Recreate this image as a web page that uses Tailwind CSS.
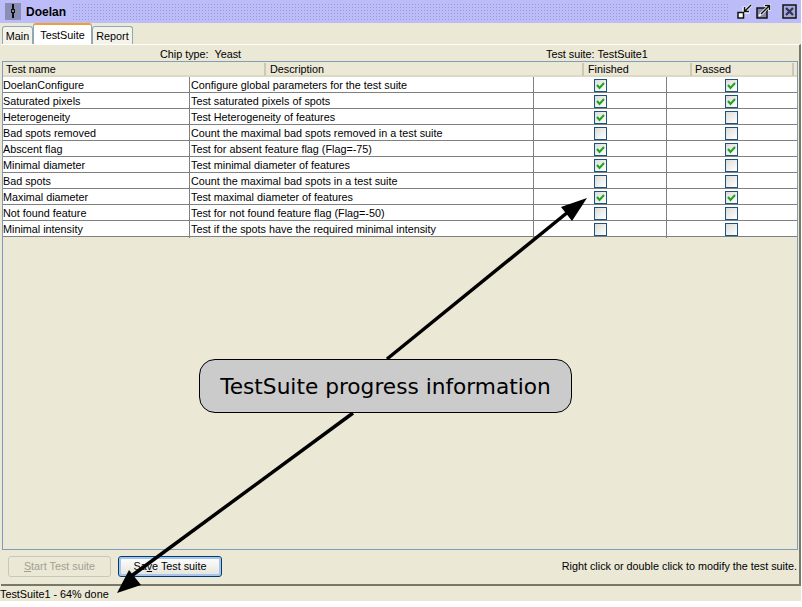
<!DOCTYPE html>
<html lang="en">
<head>
  <meta charset="UTF-8" />
  <title>Doelan</title>
  <script src="https://cdn.jsdelivr.net/npm/@tailwindcss/browser@4"></script>
</head>
<body class="bg-white font-['Liberation_Sans',Arial,sans-serif] text-[10.8px] text-black">
<div class="relative w-[801px] h-[601px] flex flex-col bg-[#ebe8d6] overflow-hidden">

  <!-- title bar -->
  <div class="h-[23px] shrink-0 flex items-center bg-[#bcbcf8] pl-[5px] pr-[4px]">
    <div class="w-[16px] h-[17px] bg-[#8a8eb4] flex items-center justify-center">
      <svg width="8" height="15" viewBox="0 0 8 15"><path d="M3 0h2v5h1v4H5v5H3V9H2V5h1z" fill="#111"/><path d="M3.5 6h1v2h-1z" fill="#fff"/></svg>
    </div>
    <span class="ml-[5px] text-[12px] font-bold w-[43px]">Doelan</span>
    <div class="flex-1 h-[17px] mx-[3px] bg-[radial-gradient(#9a9ad8_1px,transparent_1px)] bg-[length:3px_3px]"></div>
    <svg class="ml-[4px]" width="15" height="15" viewBox="0 0 15 15"><path d="M7.5 7.5L14 1M7 2.5v5.5h5.5" fill="none" stroke="#fff" stroke-width="3"/><path d="M7.5 7.5L14 1M7.5 3v4.5H12" fill="none" stroke="#111" stroke-width="1.5"/><rect x="1" y="8.5" width="5.5" height="5.5" fill="#fff" stroke="#111" stroke-width="1.5"/></svg>
    <svg class="ml-[4px]" width="15" height="15" viewBox="0 0 15 15"><rect x="1" y="4" width="10" height="10" fill="#8a8ab0" stroke="#111" stroke-width="1.5"/><path d="M3 12L6 9" stroke="#fff" stroke-width="2"/><path d="M5 10L13.5 1.5M8.5 1.5H13.5V6.5" fill="none" stroke="#fff" stroke-width="3"/><path d="M5 10L13.5 1.5M9 1.5H13.5V6" fill="none" stroke="#111" stroke-width="1.5"/></svg>
    <svg class="ml-[11px]" width="15" height="15" viewBox="0 0 15 15"><rect x="1" y="1" width="13" height="13" fill="#a8a8d8" stroke="#111" stroke-width="1.5"/><path d="M4 4l7 7M11 4l-7 7" stroke="#333358" stroke-width="2.2"/></svg>
  </div>

  <!-- tabs -->
  <div class="h-[21px] shrink-0 flex items-end pl-[2px]">
    <div class="h-[18px] w-[31px] pt-[2px] flex items-center justify-center bg-[#f4f3ea] border border-b-0 border-[#91a7b4] rounded-t-[3px]">Main</div>
    <div class="h-[21px] w-[59px] pt-[1px] flex items-center justify-center bg-white border-t-[2px] border-t-[#f0a030] border-x border-x-[#91a7b4] rounded-t-[3px]">TestSuite</div>
    <div class="h-[18px] w-[41px] pt-[2px] flex items-center justify-center bg-[#f4f3ea] border border-b-0 border-[#91a7b4] rounded-t-[3px]">Report</div>
  </div>

  <!-- panel -->
  <div class="flex-1 flex flex-col border-t border-t-white border-r-[2px] border-r-[#77776a] border-b-[2px] border-b-[#77776a] ml-[1px] min-h-0">
    <div class="h-[16px] shrink-0 flex items-center pt-[2px]">
      <span class="ml-[159px] w-[386px]">Chip type:&nbsp; Yeast</span>
      <span>Test suite: TestSuite1</span>
    </div>

    <div class="h-[489px] shrink-0 ml-[1px] mr-[1px] border border-[#7f9db9]">
      <div class="grid grid-cols-[263px_318px_108px_1fr] h-[15px] pt-[1px] bg-[#ebe8d6] border-b-[2px] border-b-[#dcd9c4] leading-[13px]">
        <div class="pl-[3px] border-r-[2px] border-r-[#cbc8b4]">Test name</div>
        <div class="pl-[4px] border-r-[2px] border-r-[#cbc8b4]">Description</div>
        <div class="pl-[4px] border-r-[2px] border-r-[#cbc8b4]">Finished</div>
        <div class="pl-[3px] mr-[3px] border-r-[2px] border-r-[#cbc8b4]">Passed</div>
      </div>
      <div class="bg-white">
        <div class="grid grid-cols-[187px_344px_133px_1fr] h-[16px] border-b border-b-[#808080] items-center">
          <div class="h-full leading-[17px] border-r border-r-[#808080]">DoelanConfigure</div>
          <div class="pl-[1px] h-full leading-[17px] border-r border-r-[#808080]">Configure global parameters for the test suite</div>
          <div class="h-full flex items-center justify-center border-r border-r-[#808080]"><div class="w-[13px] h-[13px] border border-[#1c5180] bg-gradient-to-br from-[#dcdcd7] to-white flex items-center justify-center"><svg width="9" height="9" viewBox="0 0 9 9"><path d="M1 4l2.5 3L8 2" fill="none" stroke="#21a121" stroke-width="2"/></svg></div></div>
          <div class="h-full pr-[2px] flex items-center justify-center"><div class="w-[13px] h-[13px] border border-[#1c5180] bg-gradient-to-br from-[#dcdcd7] to-white flex items-center justify-center"><svg width="9" height="9" viewBox="0 0 9 9"><path d="M1 4l2.5 3L8 2" fill="none" stroke="#21a121" stroke-width="2"/></svg></div></div>
        </div>
        <div class="grid grid-cols-[187px_344px_133px_1fr] h-[16px] border-b border-b-[#808080] items-center">
          <div class="h-full leading-[17px] border-r border-r-[#808080]">Saturated pixels</div>
          <div class="pl-[1px] h-full leading-[17px] border-r border-r-[#808080]">Test saturated pixels of spots</div>
          <div class="h-full flex items-center justify-center border-r border-r-[#808080]"><div class="w-[13px] h-[13px] border border-[#1c5180] bg-gradient-to-br from-[#dcdcd7] to-white flex items-center justify-center"><svg width="9" height="9" viewBox="0 0 9 9"><path d="M1 4l2.5 3L8 2" fill="none" stroke="#21a121" stroke-width="2"/></svg></div></div>
          <div class="h-full pr-[2px] flex items-center justify-center"><div class="w-[13px] h-[13px] border border-[#1c5180] bg-gradient-to-br from-[#dcdcd7] to-white flex items-center justify-center"><svg width="9" height="9" viewBox="0 0 9 9"><path d="M1 4l2.5 3L8 2" fill="none" stroke="#21a121" stroke-width="2"/></svg></div></div>
        </div>
        <div class="grid grid-cols-[187px_344px_133px_1fr] h-[16px] border-b border-b-[#808080] items-center">
          <div class="h-full leading-[17px] border-r border-r-[#808080]">Heterogeneity</div>
          <div class="pl-[1px] h-full leading-[17px] border-r border-r-[#808080]">Test Heterogeneity of features</div>
          <div class="h-full flex items-center justify-center border-r border-r-[#808080]"><div class="w-[13px] h-[13px] border border-[#1c5180] bg-gradient-to-br from-[#dcdcd7] to-white flex items-center justify-center"><svg width="9" height="9" viewBox="0 0 9 9"><path d="M1 4l2.5 3L8 2" fill="none" stroke="#21a121" stroke-width="2"/></svg></div></div>
          <div class="h-full pr-[2px] flex items-center justify-center"><div class="w-[13px] h-[13px] border border-[#1c5180] bg-gradient-to-br from-[#dcdcd7] to-white"></div></div>
        </div>
        <div class="grid grid-cols-[187px_344px_133px_1fr] h-[16px] border-b border-b-[#808080] items-center">
          <div class="h-full leading-[17px] border-r border-r-[#808080]">Bad spots removed</div>
          <div class="pl-[1px] h-full leading-[17px] border-r border-r-[#808080]">Count the maximal bad spots removed in a test suite</div>
          <div class="h-full flex items-center justify-center border-r border-r-[#808080]"><div class="w-[13px] h-[13px] border border-[#1c5180] bg-gradient-to-br from-[#dcdcd7] to-white"></div></div>
          <div class="h-full pr-[2px] flex items-center justify-center"><div class="w-[13px] h-[13px] border border-[#1c5180] bg-gradient-to-br from-[#dcdcd7] to-white"></div></div>
        </div>
        <div class="grid grid-cols-[187px_344px_133px_1fr] h-[16px] border-b border-b-[#808080] items-center">
          <div class="h-full leading-[17px] border-r border-r-[#808080]">Abscent flag</div>
          <div class="pl-[1px] h-full leading-[17px] border-r border-r-[#808080]">Test for absent feature flag (Flag=-75)</div>
          <div class="h-full flex items-center justify-center border-r border-r-[#808080]"><div class="w-[13px] h-[13px] border border-[#1c5180] bg-gradient-to-br from-[#dcdcd7] to-white flex items-center justify-center"><svg width="9" height="9" viewBox="0 0 9 9"><path d="M1 4l2.5 3L8 2" fill="none" stroke="#21a121" stroke-width="2"/></svg></div></div>
          <div class="h-full pr-[2px] flex items-center justify-center"><div class="w-[13px] h-[13px] border border-[#1c5180] bg-gradient-to-br from-[#dcdcd7] to-white flex items-center justify-center"><svg width="9" height="9" viewBox="0 0 9 9"><path d="M1 4l2.5 3L8 2" fill="none" stroke="#21a121" stroke-width="2"/></svg></div></div>
        </div>
        <div class="grid grid-cols-[187px_344px_133px_1fr] h-[16px] border-b border-b-[#808080] items-center">
          <div class="h-full leading-[17px] border-r border-r-[#808080]">Minimal diameter</div>
          <div class="pl-[1px] h-full leading-[17px] border-r border-r-[#808080]">Test minimal diameter of features</div>
          <div class="h-full flex items-center justify-center border-r border-r-[#808080]"><div class="w-[13px] h-[13px] border border-[#1c5180] bg-gradient-to-br from-[#dcdcd7] to-white flex items-center justify-center"><svg width="9" height="9" viewBox="0 0 9 9"><path d="M1 4l2.5 3L8 2" fill="none" stroke="#21a121" stroke-width="2"/></svg></div></div>
          <div class="h-full pr-[2px] flex items-center justify-center"><div class="w-[13px] h-[13px] border border-[#1c5180] bg-gradient-to-br from-[#dcdcd7] to-white"></div></div>
        </div>
        <div class="grid grid-cols-[187px_344px_133px_1fr] h-[16px] border-b border-b-[#808080] items-center">
          <div class="h-full leading-[17px] border-r border-r-[#808080]">Bad spots</div>
          <div class="pl-[1px] h-full leading-[17px] border-r border-r-[#808080]">Count the maximal bad spots in a test suite</div>
          <div class="h-full flex items-center justify-center border-r border-r-[#808080]"><div class="w-[13px] h-[13px] border border-[#1c5180] bg-gradient-to-br from-[#dcdcd7] to-white"></div></div>
          <div class="h-full pr-[2px] flex items-center justify-center"><div class="w-[13px] h-[13px] border border-[#1c5180] bg-gradient-to-br from-[#dcdcd7] to-white"></div></div>
        </div>
        <div class="grid grid-cols-[187px_344px_133px_1fr] h-[16px] border-b border-b-[#808080] items-center">
          <div class="h-full leading-[17px] border-r border-r-[#808080]">Maximal diameter</div>
          <div class="pl-[1px] h-full leading-[17px] border-r border-r-[#808080]">Test maximal diameter of features</div>
          <div class="h-full flex items-center justify-center border-r border-r-[#808080]"><div class="w-[13px] h-[13px] border border-[#1c5180] bg-gradient-to-br from-[#dcdcd7] to-white flex items-center justify-center"><svg width="9" height="9" viewBox="0 0 9 9"><path d="M1 4l2.5 3L8 2" fill="none" stroke="#21a121" stroke-width="2"/></svg></div></div>
          <div class="h-full pr-[2px] flex items-center justify-center"><div class="w-[13px] h-[13px] border border-[#1c5180] bg-gradient-to-br from-[#dcdcd7] to-white flex items-center justify-center"><svg width="9" height="9" viewBox="0 0 9 9"><path d="M1 4l2.5 3L8 2" fill="none" stroke="#21a121" stroke-width="2"/></svg></div></div>
        </div>
        <div class="grid grid-cols-[187px_344px_133px_1fr] h-[16px] border-b border-b-[#808080] items-center">
          <div class="h-full leading-[17px] border-r border-r-[#808080]">Not found feature</div>
          <div class="pl-[1px] h-full leading-[17px] border-r border-r-[#808080]">Test for not found feature flag (Flag=-50)</div>
          <div class="h-full flex items-center justify-center border-r border-r-[#808080]"><div class="w-[13px] h-[13px] border border-[#1c5180] bg-gradient-to-br from-[#dcdcd7] to-white"></div></div>
          <div class="h-full pr-[2px] flex items-center justify-center"><div class="w-[13px] h-[13px] border border-[#1c5180] bg-gradient-to-br from-[#dcdcd7] to-white"></div></div>
        </div>
        <div class="grid grid-cols-[187px_344px_133px_1fr] h-[16px] border-b border-b-[#808080] items-center">
          <div class="h-full leading-[17px] border-r border-r-[#808080]">Minimal intensity</div>
          <div class="pl-[1px] h-full leading-[17px] border-r border-r-[#808080]">Test if the spots have the required minimal intensity</div>
          <div class="h-full flex items-center justify-center border-r border-r-[#808080]"><div class="w-[13px] h-[13px] border border-[#1c5180] bg-gradient-to-br from-[#dcdcd7] to-white"></div></div>
          <div class="h-full pr-[2px] flex items-center justify-center"><div class="w-[13px] h-[13px] border border-[#1c5180] bg-gradient-to-br from-[#dcdcd7] to-white"></div></div>
        </div>
      </div>
    </div>

    <div class="flex-1 flex items-center pl-[7px] pr-[2px] pb-[2px]">
      <button class="w-[103px] h-[21px] border border-[#c9c7ba] rounded-[3px] text-[#a19f92]"><span class="underline">S</span>tart Test suite</button>
      <button class="ml-[7px] w-[104px] h-[21px] border border-[#003c74] rounded-[3px] bg-gradient-to-b from-white to-[#e3e3db] shadow-[inset_0_0_0_2px_#a9c4ea]">Sa<span class="underline">v</span>e Test suite</button>
      <span class="ml-auto">Right click or double click to modify the test suite.</span>
    </div>
  </div>

  <!-- status bar -->
  <div class="h-[15px] shrink-0 leading-[16px]">TestSuite1 - 64% done</div>

  <!-- annotation over the page -->
  <svg class="absolute left-0 top-0 pointer-events-none" width="801" height="601" viewBox="0 0 801 601">
    <path d="M387 359L568 212" stroke="#000" stroke-width="3.5" fill="none"/>
    <path d="M353 413L130 577" stroke="#000" stroke-width="3.5" fill="none"/>
    <path d="M587 198L561 207L572 221z" fill="#000"/>
    <path d="M117 593L129 570L141 585z" fill="#000"/>
  </svg>
  <div class="absolute left-[199px] top-[359px] w-[373px] h-[54px] pt-[2px] rounded-[16px] border border-black bg-[#cbcbcb] flex items-center justify-center font-['DejaVu_Sans',sans-serif] text-[21.7px] leading-none">TestSuite progress information</div>
</div>
</body>
</html>
